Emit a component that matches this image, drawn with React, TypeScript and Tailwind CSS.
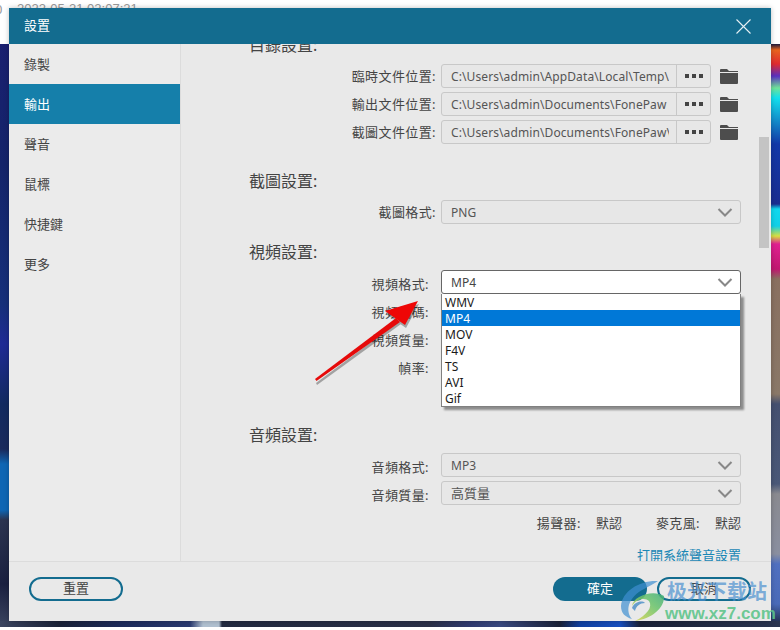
const FONT = "[font-family:'Noto_Sans','Noto_Sans_CJK_TC',sans-serif]";

const menu = ['錄製', '輸出', '聲音', '鼠標', '快捷鍵', '更多'];

const paths = [
  { label: '臨時文件位置:', value: 'C:\\Users\\admin\\AppData\\Local\\Temp\\' },
  { label: '輸出文件位置:', value: 'C:\\Users\\admin\\Documents\\FonePaw' },
  { label: '截圖文件位置:', value: 'C:\\Users\\admin\\Documents\\FonePaw\\' },
];

const formats = ['WMV', 'MP4', 'MOV', 'F4V', 'TS', 'AVI', 'Gif'];

function Chevron() {
  return (
    <svg width="16" height="9" viewBox="0 0 16 9" fill="none" className="shrink-0">
      <path d="M1.5 1 L8 7.5 L14.5 1" stroke="#888888" strokeWidth="2" />
    </svg>
  );
}

function Folder() {
  return (
    <svg width="18" height="15" viewBox="0 0 18 15" className="shrink-0">
      <path d="M0 1 Q0 0 1 0 H7 L9 2 H18 V3 H0 Z M0 4 H18 V14 Q18 15 17 15 H1 Q0 15 0 14 Z" fill="#4d4d4d" />
    </svg>
  );
}

function Heading({ children, className }: { children: string; className: string }) {
  return <div className={`h-6 text-[16px] leading-6 text-[#444444] ${className}`}>{children}</div>;
}

function SelectBox({ value, cjk }: { value: string; cjk?: boolean }) {
  return (
    <div className="flex h-6 w-[300px] items-center justify-between rounded-[3px] border border-[#c8c8c8] bg-[#e7e7e7] pl-[9px] pr-[7px] text-[#555555]">
      <span className={`pt-[2px] ${cjk ? 'text-[13px]' : 'text-[12px] tracking-[0.1px]'}`}>{value}</span>
      <Chevron />
    </div>
  );
}

function FormRow({
  label,
  pad,
  children,
}: {
  label?: string;
  pad: string;
  children: React.ReactNode;
}) {
  return (
    <div className="relative flex h-6 items-center justify-end">
      <span className={`text-[13px] tracking-[0.4px] text-[#444444] ${pad}`}>{label}</span>
      {children}
    </div>
  );
}

function Wallpaper() {
  return (
    <>
      <div className="absolute left-0 top-[44px] h-[583px] w-[9px] bg-[linear-gradient(to_bottom,#1a2070_0px,#14246a_120px,#16307a_260px,#1f2a95_300px,#122a60_360px,#1b2a5c_405px,#0f66b4_420px,#0f66b4_466px,#2c3450_476px,#1a2040_540px,#3b4560_583px)]" />
      <div className="absolute left-[771px] top-[44px] h-[583px] w-[9px] bg-[linear-gradient(to_bottom,#1a1a3e_0px,#e8641e_6px,#e02a30_20px,#5a30c0_32px,#6fe39a_44px,#12e0ee_54px,#1238a8_100px,#1a2d90_160px,#10d8ee_165px,#10d0e8_182px,#d8e040_192px,#e02090_200px,#c01870_225px,#8a7060_235px,#8a7868_350px,#455070_360px,#4a5878_440px,#8a8a90_450px,#8a8fa0_510px,#5070c0_520px,#4a6ab8_560px,#1a2238_583px)]" />
      <div className="absolute left-0 top-[621px] h-[6px] w-[780px] bg-[linear-gradient(to_right,#3b4560_0px,#1a2238_60px,#1c2a5a_120px,#2a3a70_190px,#b0c0d0_203px,#b0c0d0_219px,#222a40_222px,#2a3048_430px,#303a70_470px,#3a4a80_500px,#1a2238_560px,#1040a0_580px,#1850c0_620px,#1a2238_640px,#2a3550_780px)]" />
    </>
  );
}

function Watermark() {
  return (
    <div className="pointer-events-none absolute left-[620px] top-[578px] h-[44px] w-[152px]">
      <svg width="46" height="44" viewBox="0 0 46 44" className="absolute left-0 top-0">
        <defs>
          <linearGradient id="swoosh" x1="0" y1="1" x2="1" y2="0">
            <stop offset="0" stopColor="#e2d64a" />
            <stop offset="0.6" stopColor="#6cc46a" />
            <stop offset="1" stopColor="#3fae7a" />
          </linearGradient>
        </defs>
        <path d="M38 3 C20 2 2 13 1 28 C1 35 5 39 12 41 C5 33 8 19 24 11 C29 8 34 6 38 3 Z" fill="#3f8fd0" opacity="0.7" />
        <path d="M44 18 C45 30 31 41 15 43 C27 37 33 29 29 23 C25 19 16 21 12 28 C13 18 33 11 44 18 Z" fill="url(#swoosh)" opacity="0.85" />
        <path d="M12 30 C14 24 22 22 25 25 C20 25 16 28 15 33 Z" fill="#2f7fc0" opacity="0.7" />
      </svg>
      <div className="absolute left-[47px] top-0 whitespace-nowrap text-[20px] font-bold leading-[26px] text-[#4a90d0]/70 [font-family:'Noto_Sans_CJK_SC',sans-serif]">
        极光下载站
      </div>
      <div className="absolute left-[45px] top-[26px] whitespace-nowrap text-[17px] font-bold leading-[20px] text-[#5cc48a]/90 [font-family:'Liberation_Sans',sans-serif]">
        www.xz7.com
      </div>
    </div>
  );
}

function RedArrow() {
  return (
    <svg
      width="120"
      height="100"
      viewBox="0 0 120 100"
      className="pointer-events-none absolute left-[310px] top-[295px]"
    >
      <g fill="#000000" opacity="0.3" transform="translate(1 3)">
        <path d="M5 85 L87 24 L90 26 L6 87 Z" />
        <path d="M108 6 L75 16 L95 30 Z" />
      </g>
      <path d="M5 84 L86 23 L90 27 L6.5 86 Z" fill="#e60a0a" />
      <path d="M108 6 L75 16 L95 30 Z" fill="#ee0606" />
    </svg>
  );
}

export default function App() {
  return (
    <div className={`relative h-[630px] w-[780px] overflow-hidden bg-white ${FONT}`}>
      <div className="absolute left-[-5px] top-[-1px] text-[13px] leading-5 text-[#999999]">0</div>
      <div className="absolute left-[17px] top-[-1px] text-[13px] leading-5 text-[#999999] [font-family:'Liberation_Sans',sans-serif]">
        2022-05-21 02:07:21
      </div>
      <Wallpaper />

      <div className="absolute left-[9px] top-[8px] flex h-[613px] w-[762px] flex-col bg-[#e9e9e9] shadow-[0_0_5px_rgba(0,0,0,0.25)]">
        <div className="flex h-9 shrink-0 items-center justify-between bg-[#136c8f] pl-[15px] pr-[20px] text-[13px] text-white">
          <span>設置</span>
          <svg width="15" height="15" viewBox="0 0 15 15" fill="none">
            <path d="M0.5 0.5 L14.5 14.5 M14.5 0.5 L0.5 14.5" stroke="#e6f0f4" strokeWidth="1.1" />
          </svg>
        </div>

        <div className="flex min-h-0 flex-1">
          <div className="w-[172px] shrink-0 border-r border-[#dcdcdc] bg-[#ebebeb]">
            {menu.map((item) => (
              <div
                key={item}
                className={`flex h-10 items-center pl-[15px] pt-[2px] text-[13px] ${
                  item === '輸出' ? 'bg-[#157faa] text-white' : 'text-[#444444]'
                }`}
              >
                {item}
              </div>
            ))}
          </div>

          <div className="relative min-w-0 flex-1 overflow-hidden pl-[68px] pr-[30px]">
            <Heading className="mt-[-11px]">目錄設置:</Heading>
            <div className="mt-[7px] flex flex-col gap-1">
              {paths.map((p) => (
                <div key={p.label} className="flex h-6 items-center justify-end">
                  <span className="pr-[5px] pt-[2px] text-[13px] tracking-[0.4px] text-[#444444]">{p.label}</span>
                  <div className="flex h-6 w-[270px] items-center rounded-[3px] border border-[#c8c8c8] bg-[#e7e7e7]">
                    <div className="ml-[9px] w-[218px] overflow-hidden whitespace-nowrap pt-[2px] text-[12px] tracking-[0.1px] text-[#555555]">
                      {p.value}
                    </div>
                    <div className="ml-auto flex h-full w-[34px] items-center justify-center gap-[3px] border-l border-[#c8c8c8]">
                      <span className="h-1 w-1 bg-[#444444]" />
                      <span className="h-1 w-1 bg-[#444444]" />
                      <span className="h-1 w-1 bg-[#444444]" />
                    </div>
                  </div>
                  <div className="w-[30px] pl-[9px]">
                    <Folder />
                  </div>
                </div>
              ))}
            </div>

            <Heading className="mt-[25px]">截圖設置:</Heading>
            <div className="mt-[7px]">
              <FormRow label="截圖格式:" pad="pr-[5px] pt-[2px]">
                <SelectBox value="PNG" />
              </FormRow>
            </div>

            <Heading className="mt-[16px]">視頻設置:</Heading>
            <div className="mt-[6px] flex flex-col gap-1">
              <div className="relative z-10 flex h-6 items-center justify-end">
                <span className="pr-[12px] pt-[6px] text-[13px] tracking-[0.4px] text-[#444444]">視頻格式:</span>
                <div className="flex h-6 w-[300px] items-center justify-between rounded-[3px] border border-[#666666] bg-white pl-[9px] pr-[7px] text-[#444444]">
                  <span className="pt-[2px] text-[12px] tracking-[0.1px]">MP4</span>
                  <Chevron />
                </div>
                <div className="absolute right-0 top-6 h-[113px] w-[300px] border border-t-0 border-[#808080] bg-white shadow-[3px_3px_2px_rgba(0,0,0,0.4)]">
                  {formats.map((f) => (
                    <div
                      key={f}
                      className={`h-4 pl-[3px] text-[12px] leading-[18px] ${
                        f === 'MP4' ? 'bg-[#0078d7] text-white' : 'text-[#1a1a1a]'
                      }`}
                    >
                      {f}
                    </div>
                  ))}
                </div>
              </div>
              <FormRow label="視頻編碼:" pad="pr-[12px] pt-[6px]">
                <div className="w-[300px]" />
              </FormRow>
              <FormRow label="視頻質量:" pad="pr-[12px] pt-[6px]">
                <div className="w-[300px]" />
              </FormRow>
              <FormRow label="幀率:" pad="pr-[12px] pt-[6px]">
                <div className="w-[300px]" />
              </FormRow>
            </div>

            <Heading className="mt-[45px]">音頻設置:</Heading>
            <div className="mt-[6px] flex flex-col gap-1">
              <FormRow label="音頻格式:" pad="pr-[12px] pt-[6px]">
                <SelectBox value="MP3" />
              </FormRow>
              <FormRow label="音頻質量:" pad="pr-[12px] pt-[6px]">
                <SelectBox value="高質量" cjk />
              </FormRow>
            </div>

            <div className="mt-[7px] flex h-6 items-center justify-end text-[13px] text-[#444444]">
              <span className="tracking-[0.4px]">揚聲器:</span>
              <span className="ml-[15px]">默認</span>
              <span className="ml-[34px] tracking-[0.4px]">麥克風:</span>
              <span className="ml-[15px]">默認</span>
            </div>
            <div className="mt-2 flex h-6 items-center justify-end text-[13px] text-[#1a87b5]">
              打開系統聲音設置
            </div>

            <div className="absolute right-[2px] top-[93px] h-[111px] w-[10px] bg-[#c4c4c4]" />
          </div>
        </div>

        <div className="flex h-[60px] shrink-0 items-start justify-between border-t border-[#dcdcdc] px-5 pt-[15px] text-[13px] text-[#444444]">
          <button className="h-6 w-[94px] rounded-full border-2 border-[#136c8f]">重置</button>
          <div className="flex gap-2.5">
            <button className="h-6 w-[94px] rounded-full bg-[#136c8f] text-white">確定</button>
            <button className="h-6 w-[94px] rounded-full border-2 border-[#136c8f]">取消</button>
          </div>
        </div>
      </div>

      <RedArrow />
      <Watermark />
    </div>
  );
}
